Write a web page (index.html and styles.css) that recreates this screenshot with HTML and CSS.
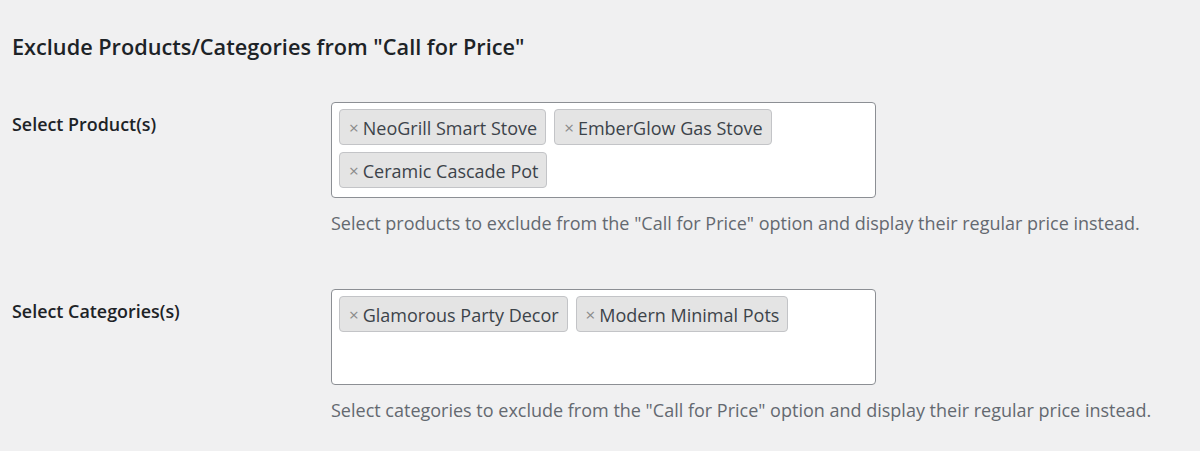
FILE: index.html
```html
<!DOCTYPE html>
<html>
<head>
<meta charset="utf-8">
<link rel="stylesheet" href="styles.css">
</head>
<body>
<div class="page">
  <h2 class="title">Exclude Products/Categories from "Call for Price"</h2>
  <div class="form">
    <div class="row">
      <div class="label">Select Product(s)</div>
      <div class="field">
        <div class="select">
          <span class="tag"><span class="x">×</span>NeoGrill Smart Stove</span>
          <span class="tag"><span class="x">×</span>EmberGlow Gas Stove</span>
          <span class="tag"><span class="x">×</span>Ceramic Cascade Pot</span>
        </div>
        <p class="desc">Select products to exclude from the "Call for Price" option and display their regular price instead.</p>
      </div>
    </div>
    <div class="row">
      <div class="label">Select Categories(s)</div>
      <div class="field">
        <div class="select">
          <span class="tag"><span class="x">×</span>Glamorous Party Decor</span>
          <span class="tag"><span class="x">×</span>Modern Minimal Pots</span>
        </div>
        <p class="desc">Select categories to exclude from the "Call for Price" option and display their regular price instead.</p>
      </div>
    </div>
  </div>
</div>
</body>
</html>
```
FILE: styles.css
```css
html, body {
  margin: 0;
  padding: 0;
  background: #f0f0f1;
}
body {
  font-family: "Open Sans", "Noto Sans", sans-serif;
  color: #1d2327;
}
.page {
  padding: 0 12px;
}
.title {
  margin: 0;
  padding-top: 32px;
  font-size: 21.7px;
  line-height: 30px;
  font-weight: 600;
  color: #1d2327;
}
.form {
  display: flex;
  flex-direction: column;
  gap: 54px;
  padding-top: 40px;
}
.row {
  display: grid;
  grid-template-columns: 319px 1fr;
}
.label {
  font-size: 17.9px;
  font-weight: 600;
  line-height: 24px;
  padding-top: 10px;
  color: #1d2327;
}
.select {
  box-sizing: border-box;
  width: 545px;
  min-height: 96px;
  background: #fff;
  border: 1px solid #8c8f94;
  border-radius: 4px;
  padding: 6px 7px;
  display: flex;
  flex-wrap: wrap;
  align-content: flex-start;
  gap: 7px 8px;
}
.tag {
  box-sizing: border-box;
  height: 36px;
  display: inline-flex;
  align-items: center;
  padding: 1px 8px 0 9px;
  background: #e4e4e4;
  border: 1px solid #c3c4c7;
  border-radius: 4px;
  font-size: 18px;
  color: #3c434a;
}
.x {
  color: #8a8a8a;
  font-size: 17px;
  margin-right: 4px;
}
.desc {
  margin: 13px 0 0;
  font-size: 18px;
  line-height: 24px;
  color: #646970;
}
```
